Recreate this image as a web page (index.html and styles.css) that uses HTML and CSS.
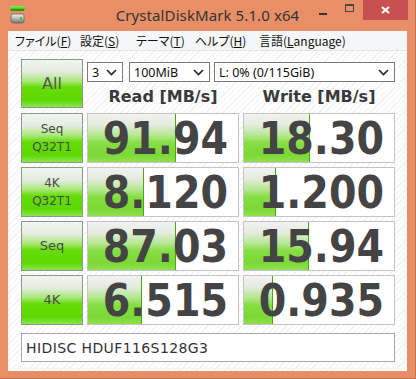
FILE: index.html
```html
<!DOCTYPE html>
<html>
<head>
<meta charset="utf-8">
<link rel="stylesheet" href="styles.css">
</head>
<body>
<div class="window">
  <div class="titlebar">
    <svg class="appicon" width="16" height="18" viewBox="0 0 16 18">
      <defs>
        <linearGradient id="gb" x1="0" y1="0" x2="0" y2="1">
          <stop offset="0" stop-color="#8ef060"/>
          <stop offset="1" stop-color="#2fb400"/>
        </linearGradient>
        <linearGradient id="dk" x1="0" y1="0" x2="0" y2="1">
          <stop offset="0" stop-color="#f4f4f4"/>
          <stop offset="0.5" stop-color="#b8b8b8"/>
          <stop offset="1" stop-color="#707070"/>
        </linearGradient>
      </defs>
      <rect x="0" y="0" width="15" height="4" rx="1" fill="url(#gb)"/>
      <rect x="1" y="3" width="13" height="2" fill="#2a9a00"/>
      <rect x="1" y="8" width="13" height="9" rx="2" fill="url(#dk)" stroke="#666" stroke-width="0.8"/>
      <rect x="10" y="11" width="2" height="3" fill="#30d000"/>
    </svg>
    <div class="title">CrystalDiskMark 5.1.0 x64</div>
    <div class="controls">
      <div class="ctl min"><span class="minbar"></span></div>
      <div class="ctl max"><span class="maxbox"></span></div>
      <div class="ctl close">
        <svg width="9" height="8" viewBox="0 0 9 8"><path d="M1 1 L8 7 M8 1 L1 7" stroke="#fff" stroke-width="2"/></svg>
      </div>
    </div>
  </div>
  <div class="client">
    <div class="menubar">
      <span class="mi w1">ファイル(<u>F</u>)</span>
      <span class="mi w2">設定(<u>S</u>)</span>
      <span class="mi w3">テーマ(<u>T</u>)</span>
      <span class="mi w4">ヘルプ(<u>H</u>)</span>
      <span class="mi">言語(<u>L</u>anguage)</span>
    </div>
    <div class="main">
      <div class="grid">
        <div class="btn big">All</div>
        <div class="topright">
          <div class="selects">
            <div class="sel s1"><span>3</span><svg class="chev" width="11" height="7" viewBox="0 0 11 7"><path d="M1 1 L5.5 5.5 L10 1" fill="none" stroke="#222" stroke-width="1.6"/></svg></div>
            <div class="sel s2"><span>100MiB</span><svg class="chev" width="11" height="7" viewBox="0 0 11 7"><path d="M1 1 L5.5 5.5 L10 1" fill="none" stroke="#222" stroke-width="1.6"/></svg></div>
            <div class="sel s3"><span>L: 0% (0/115GiB)</span><svg class="chev" width="11" height="7" viewBox="0 0 11 7"><path d="M1 1 L5.5 5.5 L10 1" fill="none" stroke="#222" stroke-width="1.6"/></svg></div>
          </div>
          <div class="labels">
            <div class="lbl">Read [MB/s]</div>
            <div class="lbl">Write [MB/s]</div>
          </div>
        </div>

        <div class="btn">Seq<br>Q32T1</div>
        <div class="val"><div class="bar" style="width:88px"></div><span class="num">91.94</span></div>
        <div class="val"><div class="bar" style="width:66px"></div><span class="num">18.30</span></div>

        <div class="btn">4K<br>Q32T1</div>
        <div class="val"><div class="bar" style="width:56px"></div><span class="num">8.120</span></div>
        <div class="val"><div class="bar" style="width:32px"></div><span class="num">1.200</span></div>

        <div class="btn mid">Seq</div>
        <div class="val"><div class="bar" style="width:88px"></div><span class="num">87.03</span></div>
        <div class="val"><div class="bar" style="width:65px"></div><span class="num">15.94</span></div>

        <div class="btn mid">4K</div>
        <div class="val"><div class="bar" style="width:54px"></div><span class="num">6.515</span></div>
        <div class="val"><div class="bar" style="width:29px"></div><span class="num">0.935</span></div>
      </div>
      <div class="model">HIDISC HDUF116S128G3</div>
    </div>
  </div>
</div>
</body>
</html>
```
FILE: styles.css
```css
* { box-sizing: border-box; }
html, body { margin: 0; padding: 0; }
body {
  width: 416px;
  height: 379px;
  overflow: hidden;
  background: #e98f67;
}
.window {
  width: 416px;
  height: 379px;
  border-right: 1px solid #c9734e;
  border-bottom: 1px solid #c9734e;
  display: flex;
  flex-direction: column;
}
.titlebar {
  height: 31px;
  display: flex;
  position: relative;
  align-items: flex-start;
}
.appicon {
  margin: 6px 0 0 10px;
}
.title {
  position: absolute;
  left: 0;
  right: 0;
  top: 5px;
  text-align: center;
  font-family: "Noto Sans", sans-serif;
  font-size: 15px;
  color: #333;
  letter-spacing: 0.1px;
}
.controls {
  margin-left: auto;
  margin-right: 7px;
  display: flex;
  position: relative;
  z-index: 1;
}
.ctl {
  height: 20px;
  display: flex;
  align-items: center;
  justify-content: center;
}
.min { width: 26px; }
.max { width: 27px; }
.close { width: 45px; background: #c75050; }
.minbar {
  width: 8px;
  height: 2px;
  background: #333;
  margin-top: 7px;
}
.maxbox {
  width: 9px;
  height: 8px;
  border: 1px solid #444;
  border-top-width: 2px;
  margin-top: -4px;
}
.close svg { margin-top: -1px; }

.client {
  margin: 0 8px;
  height: 340px;
  background: #fff;
  display: flex;
  flex-direction: column;
}
.menubar {
  height: 20px;
  background: #f5f6f7;
  border-bottom: 1px solid #e4e6e9;
  display: flex;
  align-items: center;
  padding-left: 7px;
  font-family: "Noto Sans CJK JP", sans-serif;
  font-feature-settings: "palt";
  font-size: 12px;
  color: #111;
  white-space: nowrap;
}
.mi { flex: none; }
.mi u { text-decoration: underline; text-underline-offset: 1px; }
.w1 { width: 65px; }
.w2 { width: 56px; }
.w3 { width: 59px; }
.w4 { width: 64px; }

.main {
  flex: 1;
  padding: 8px 13px 0 13px;
  background: repeating-linear-gradient(135deg, #ffffff 0px, #ffffff 3px, #f1f1f1 3px, #f1f1f1 4px);
}
.grid {
  display: grid;
  grid-template-columns: 62px 152px 152px;
  grid-template-rows: 50px repeat(4, 50px);
  column-gap: 4px;
  row-gap: 4px;
}
.btn {
  border: 1px solid #8a9a8a;
  background: linear-gradient(to bottom, #f3f3f3 0%, #e4ecdf 25%, #a8e878 45%, #66dc08 58%, #5cd800 85%, #8ae650 100%);
  display: flex;
  align-items: center;
  justify-content: center;
  text-align: center;
  font-family: "DejaVu Sans", sans-serif;
  font-size: 12px;
  line-height: 18px;
  color: #4a4a4a;
}
.btn.big { font-size: 16px; height: 49px; color: #555; }
.btn.mid { font-size: 13px; }
.topright {
  grid-column: 2 / 4;
  display: flex;
  flex-direction: column;
}
.selects {
  display: flex;
  margin-top: 3px;
  height: 20px;
}
.sel {
  height: 20px;
  border: 1px solid #7a7a7a;
  background: #fff;
  display: flex;
  align-items: center;
  justify-content: space-between;
  padding: 0 5px 0 4px;
  font-family: "Noto Sans", sans-serif;
  font-size: 12.5px;
  color: #111;
}
.s1 { width: 36px; }
.s2 { width: 81px; margin-left: 6px; }
.s3 { width: 181px; margin-left: 4px; }
.labels {
  display: grid;
  grid-template-columns: 152px 152px;
  column-gap: 4px;
  margin-top: 4px;
}
.lbl {
  text-align: center;
  font-family: "DejaVu Sans", sans-serif;
  font-weight: bold;
  font-size: 16px;
  color: #3a3a3a;
  line-height: 22px;
}
.val {
  position: relative;
  border: 1px solid #c4c4c4;
  background: #fff;
  overflow: hidden;
}
.bar {
  position: absolute;
  left: 0;
  top: 0;
  bottom: 0;
  border-right: 1px solid #48a818;
  background: linear-gradient(to bottom, #f2f2f2 0%, #e4ebdf 22%, #b8e894 44%, #86de44 60%, #7ad834 85%, #90e050 100%);
}
.num {
  position: relative;
  display: block;
  text-align: right;
  padding-right: 10px;
  font-family: "DejaVu Sans Condensed", "DejaVu Sans", sans-serif;
  font-stretch: condensed;
  font-weight: bold;
  font-size: 44px;
  line-height: 50px;
  color: #444;
}
.model {
  margin-top: 8px;
  height: 29px;
  width: 374px;
  border: 1px solid #a8a8a8;
  background: #fff;
  display: flex;
  align-items: center;
  padding-left: 4px;
  font-family: "DejaVu Sans", sans-serif;
  font-size: 14px;
  letter-spacing: 0.4px;
  color: #333;
}
```
